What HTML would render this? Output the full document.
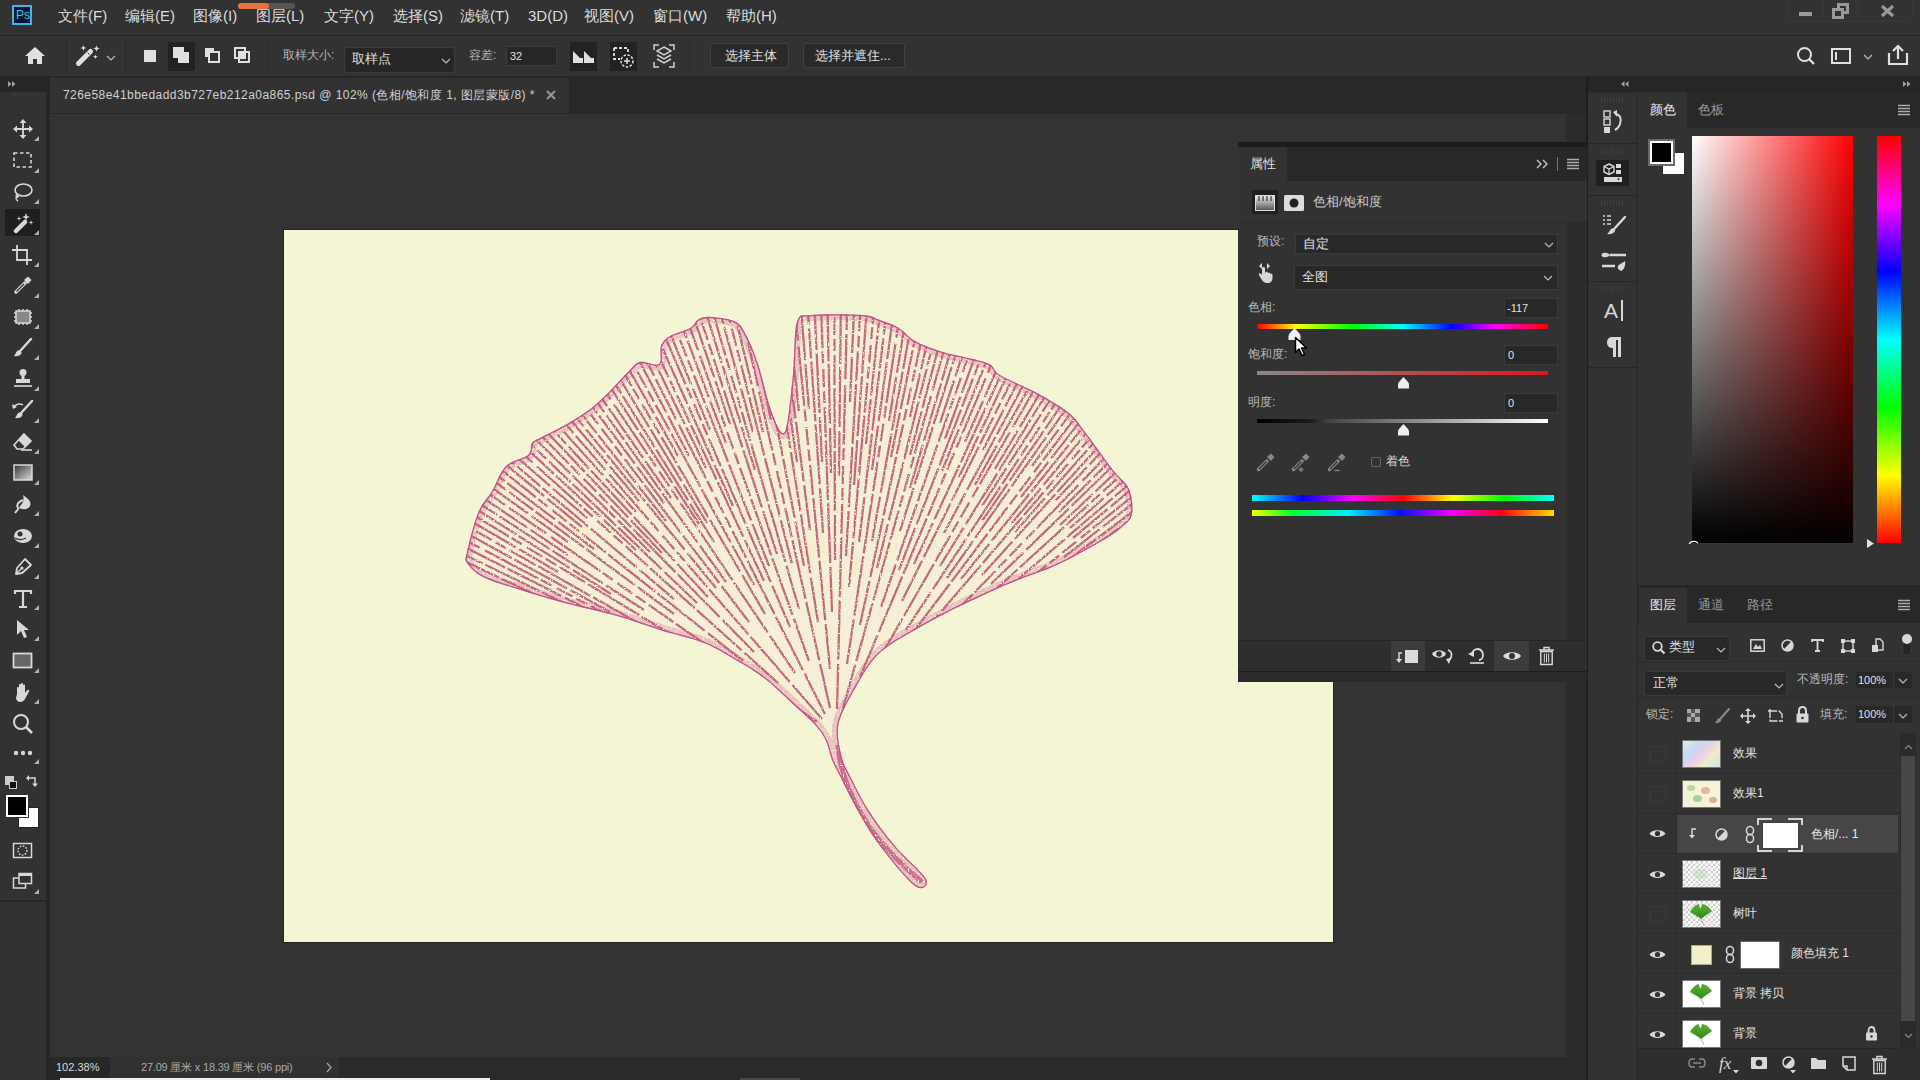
<!DOCTYPE html>
<html><head><meta charset="utf-8">
<style>
*{margin:0;padding:0;box-sizing:border-box}
html,body{width:1920px;height:1080px;overflow:hidden;background:#333333;font-family:"Liberation Sans",sans-serif;color:#d6d6d6}
.a{position:absolute}
.t{position:absolute;white-space:nowrap;line-height:1}
</style></head><body>
<!-- menubar -->
<div class="a" style="left:0;top:0;width:1920px;height:35px;background:#323232"></div>
<div class="a" style="left:0;top:35px;width:1920px;height:1px;background:#262626"></div>

<!-- PS logo -->
<div class="a" style="left:12px;top:5px;width:20px;height:20px;background:#001a33;border:2px solid #44b4e4"></div>
<div class="t" style="left:16px;top:9px;font-size:12px;color:#4cc0f0;letter-spacing:0px">Ps</div>
<div class="a" style="left:238px;top:3px;width:57px;height:6px;background:#555;border-radius:3px"></div>
<div class="a" style="left:238px;top:3px;width:31px;height:6px;background:#e8743b;border-radius:3px"></div>
<div class="t" style="left:58px;top:8px;font-size:15px;color:#dcdcdc">文件(F)</div>
<div class="t" style="left:125px;top:8px;font-size:15px;color:#dcdcdc">编辑(E)</div>
<div class="t" style="left:193px;top:8px;font-size:15px;color:#dcdcdc">图像(I)</div>
<div class="t" style="left:256px;top:8px;font-size:15px;color:#dcdcdc">图层(L)</div>
<div class="t" style="left:324px;top:8px;font-size:15px;color:#dcdcdc">文字(Y)</div>
<div class="t" style="left:393px;top:8px;font-size:15px;color:#dcdcdc">选择(S)</div>
<div class="t" style="left:460px;top:8px;font-size:15px;color:#dcdcdc">滤镜(T)</div>
<div class="t" style="left:528px;top:8px;font-size:15px;color:#dcdcdc">3D(D)</div>
<div class="t" style="left:584px;top:8px;font-size:15px;color:#dcdcdc">视图(V)</div>
<div class="t" style="left:653px;top:8px;font-size:15px;color:#dcdcdc">窗口(W)</div>
<div class="t" style="left:726px;top:8px;font-size:15px;color:#dcdcdc">帮助(H)</div>
<!-- window controls -->
<div class="a" style="left:1787px;top:-4px;width:126px;height:26px;border:1px solid #383838;border-radius:4px"></div>
<div class="a" style="left:1823px;top:0;width:1px;height:22px;background:#383838"></div>
<div class="a" style="left:1857px;top:0;width:1px;height:22px;background:#383838"></div>
<div class="a" style="left:1799px;top:12px;width:13px;height:4px;background:#999"></div>
<svg class="a" style="left:1831px;top:3px" width="20" height="18"><rect x="7.5" y="1.5" width="9" height="8" fill="none" stroke="#999" stroke-width="3"/><rect x="2.5" y="6.5" width="9" height="8" fill="#323232" stroke="#999" stroke-width="3"/></svg>
<svg class="a" style="left:1880px;top:5px" width="15" height="12"><path d="M2 1L13 11M13 1L2 11" stroke="#999" stroke-width="3.2"/></svg>
<!-- options bar -->
<div class="a" style="left:0;top:36px;width:1920px;height:41px;background:#323232"></div>
<div class="a" style="left:0;top:76px;width:1920px;height:1px;background:#262626"></div>

<!-- options content -->
<svg class="a" style="left:24px;top:46px" width="22" height="20"><path d="M11 1L1 10H4V18H9V13H13V18H18V10H21Z" fill="#e0e0e0"/></svg>
<div class="a" style="left:66px;top:40px;width:1px;height:32px;background:#2a2a2a"></div>
<svg class="a" style="left:74px;top:44px" width="30" height="24"><path d="M4.5 19.5L16.5 7.5" stroke="#e0e0e0" stroke-width="5" stroke-linecap="round"/><path d="M13.5 8.5L15.5 10.5" stroke="#323232" stroke-width="1"/><path d="M9.4 0.6000000000000001Q9.4 4 12.8 4Q9.4 4 9.4 7.4Q9.4 4 6.0 4Q9.4 4 9.4 0.6000000000000001ZM22.5 0.7000000000000002Q22.5 4.5 26.3 4.5Q22.5 4.5 22.5 8.3Q22.5 4.5 18.7 4.5Q22.5 4.5 22.5 0.7000000000000002ZM21.4 10.0Q21.4 12.8 24.2 12.8Q21.4 12.8 21.4 15.600000000000001Q21.4 12.8 18.599999999999998 12.8Q21.4 12.8 21.4 10.0Z" fill="#e0e0e0"/></svg>
<svg class="a" style="left:106px;top:55px" width="10" height="6"><path d="M1 1L5 5L9 1" stroke="#bbb" stroke-width="1.2" fill="none"/></svg>
<div class="a" style="left:125px;top:40px;width:1px;height:32px;background:#2a2a2a"></div>
<div class="a" style="left:144px;top:50px;width:12px;height:12px;background:#e0e0e0"></div>
<div class="a" style="left:168px;top:42px;width:27px;height:29px;background:#222"></div>
<div class="a" style="left:173px;top:47px;width:11px;height:11px;background:#e0e0e0"></div>
<div class="a" style="left:178px;top:52px;width:11px;height:11px;background:#e0e0e0"></div>
<svg class="a" style="left:203px;top:46px" width="18" height="18"><rect x="2" y="2" width="9" height="9" fill="#e0e0e0"/><rect x="6" y="6" width="10" height="10" fill="#323232" stroke="#e0e0e0" stroke-width="2"/></svg>
<svg class="a" style="left:233px;top:46px" width="18" height="18"><rect x="2" y="2" width="10" height="10" fill="none" stroke="#e0e0e0" stroke-width="2"/><rect x="6" y="6" width="10" height="10" fill="none" stroke="#e0e0e0" stroke-width="2"/><rect x="6" y="6" width="6" height="6" fill="#e0e0e0"/></svg>
<div class="a" style="left:268px;top:40px;width:1px;height:32px;background:#2a2a2a"></div>
<div class="t" style="left:283px;top:49px;font-size:12px;color:#b4b4b4">取样大小:</div>
<div class="a" style="left:344px;top:47px;width:111px;height:26px;background:#262626;border:1px solid #3c3c3c;border-radius:2px"></div>
<div class="t" style="left:352px;top:52px;font-size:13px;color:#e0e0e0">取样点</div>
<svg class="a" style="left:441px;top:58px" width="10" height="6"><path d="M1 1L5 5L9 1" stroke="#bbb" stroke-width="1.2" fill="none"/></svg>
<div class="t" style="left:469px;top:49px;font-size:12px;color:#b4b4b4">容差:</div>
<div class="a" style="left:506px;top:46px;width:51px;height:20px;background:#262626;border:1px solid #3c3c3c"></div>
<div class="t" style="left:510px;top:51px;font-size:11px;color:#e0e0e0">32</div>
<div class="a" style="left:570px;top:42px;width:27px;height:29px;background:#222"></div>
<svg class="a" style="left:572px;top:48px" width="24" height="17"><path d="M1 3L5 7V15H1Z M5 7L8 10H11V15H5Z M12 3L16 7V15H12Z M16 7L19 10H22V15H16Z" fill="#e0e0e0"/></svg>
<div class="a" style="left:610px;top:42px;width:27px;height:29px;background:#222"></div>
<svg class="a" style="left:611px;top:45px" width="25" height="24"><path d="M3 3H17V9 M3 3V14H9" stroke="#e0e0e0" stroke-width="1.8" fill="none" stroke-dasharray="3 2"/><circle cx="16" cy="16" r="6" stroke="#e0e0e0" stroke-width="1.5" fill="none" stroke-dasharray="2.5 1.5"/><path d="M16 13V19M13 16H19" stroke="#e0e0e0" stroke-width="1.5"/></svg>
<svg class="a" style="left:653px;top:44px" width="22" height="24"><path d="M1 6V1H6 M16 1H21V6 M1 18V23H6 M16 23H21V18" stroke="#d0d0d0" stroke-width="1.5" fill="none"/></g><path d="M11 3L18 7L11 11L4 7Z" fill="none" stroke="#d0d0d0" stroke-width="1.5"/><path d="M4 11L11 15L18 11 M4 15L11 19L18 15" fill="none" stroke="#d0d0d0" stroke-width="1.5"/></svg>
<div class="a" style="left:689px;top:40px;width:1px;height:32px;background:#2a2a2a"></div>
<div class="a" style="left:710px;top:43px;width:79px;height:25px;background:#2a2a2a;border:1px solid #404040;border-radius:2px"></div>
<div class="t" style="left:725px;top:49px;font-size:13px;color:#e0e0e0">选择主体</div>
<div class="a" style="left:803px;top:43px;width:102px;height:25px;background:#2a2a2a;border:1px solid #404040;border-radius:2px"></div>
<div class="t" style="left:815px;top:49px;font-size:13px;color:#e0e0e0">选择并遮住...</div>
<!-- right options -->
<svg class="a" style="left:1796px;top:46px" width="20" height="20"><circle cx="8.5" cy="8.5" r="6.5" stroke="#e0e0e0" stroke-width="2" fill="none"/><path d="M13 13L18 18" stroke="#e0e0e0" stroke-width="2.4"/></svg>
<svg class="a" style="left:1831px;top:48px" width="20" height="16"><rect x="1" y="1" width="18" height="14" fill="none" stroke="#e0e0e0" stroke-width="2"/><path d="M5 4V12" stroke="#e0e0e0" stroke-width="2"/></svg>
<svg class="a" style="left:1863px;top:54px" width="10" height="6"><path d="M1 1L5 5L9 1" stroke="#bbb" stroke-width="1.2" fill="none"/></svg>
<svg class="a" style="left:1887px;top:44px" width="22" height="22"><path d="M2 9V20H20V9" stroke="#e0e0e0" stroke-width="2.2" fill="none"/><path d="M11 15V2 M6 7L11 2L16 7" stroke="#e0e0e0" stroke-width="2.2" fill="none"/></svg>

<!-- left toolbar -->
<div class="a" style="left:0;top:77px;width:46px;height:1003px;background:#323232"></div>
<div class="a" style="left:0;top:77px;width:46px;height:15px;background:#262626"></div>
<div class="a" style="left:46px;top:77px;width:4px;height:1003px;background:#262626"></div>

<div class="a" style="left:0;top:900px;width:46px;height:2px;background:#262626"></div>
<!-- toolbar header chevrons -->
<svg class="a" style="left:8px;top:81px" width="8" height="6"><path d="M0 0L3.5 3L0 6Z M4 0L7.5 3L4 6Z" fill="#a0a0a0"/></svg>
<div class="a" style="left:12px;top:93px;width:24px;height:3px;background:repeating-linear-gradient(90deg,#3c3c3c 0 1px,transparent 1px 3px)"></div>
<!-- move -->
<svg class="a" style="left:13px;top:119px" width="20" height="20"><path d="M10 1V19M1 10H19" stroke="#d8d8d8" stroke-width="1.8"/><path d="M10 0L13.5 4H6.5Z M10 20L13.5 16H6.5Z M0 10L4 6.5V13.5Z M20 10L16 6.5V13.5Z" fill="#d8d8d8"/></svg>
<svg class="a" style="left:34px;top:136px" width="5" height="5"><path d="M5 0V5H0Z" fill="#b0b0b0"/></svg>
<!-- marquee -->
<svg class="a" style="left:13px;top:152px" width="20" height="18"><rect x="1" y="1" width="17" height="14" fill="none" stroke="#d8d8d8" stroke-width="1.6" stroke-dasharray="3.5 2.5"/></svg>
<svg class="a" style="left:34px;top:168px" width="5" height="5"><path d="M5 0V5H0Z" fill="#b0b0b0"/></svg>
<!-- lasso -->
<svg class="a" style="left:13px;top:182px" width="20" height="20"><ellipse cx="10.5" cy="8" rx="8.5" ry="6" fill="none" stroke="#d8d8d8" stroke-width="1.6"/><path d="M4 12C2 14 4 16 5 15C6 14 4 13 3 16C3 18 5 19 5 19" fill="none" stroke="#d8d8d8" stroke-width="1.4"/></svg>
<svg class="a" style="left:34px;top:199px" width="5" height="5"><path d="M5 0V5H0Z" fill="#b0b0b0"/></svg>
<!-- magic wand selected -->
<div class="a" style="left:5px;top:209px;width:35px;height:27px;background:#1f1f1f"></div>
<svg class="a" style="left:12px;top:212px" width="24" height="22"><path d="M4 19L13 10" stroke="#d8d8d8" stroke-width="4.5" stroke-linecap="round"/><path d="M14 1L15 4L18 5L15 6L14 9L13 6L10 5L13 4Z M7 4L7.6 6L9.5 6.5L7.6 7L7 9L6.4 7L4.5 6.5L6.4 6Z M19 8L19.6 10L21.5 10.5L19.6 11L19 13L18.4 11L16.5 10.5L18.4 10Z" fill="#d8d8d8"/></svg>
<svg class="a" style="left:34px;top:230px" width="5" height="5"><path d="M5 0V5H0Z" fill="#b0b0b0"/></svg>
<!-- crop -->
<svg class="a" style="left:11px;top:244px" width="24" height="22"><path d="M6 1V16H21 M1 6H16V21" fill="none" stroke="#d8d8d8" stroke-width="1.8"/></svg>
<svg class="a" style="left:34px;top:262px" width="5" height="5"><path d="M5 0V5H0Z" fill="#b0b0b0"/></svg>
<!-- eyedropper -->
<svg class="a" style="left:13px;top:275px" width="20" height="20"><path d="M3 17L12 8" stroke="#d8d8d8" stroke-width="3.5" stroke-linecap="round" fill="none"/><path d="M3.5 16.5L11 9" stroke="#323232" stroke-width="1.2"/><path d="M11 5L15 1.5L18.5 5L15 9Z" fill="#d8d8d8"/></svg>
<svg class="a" style="left:34px;top:293px" width="5" height="5"><path d="M5 0V5H0Z" fill="#b0b0b0"/></svg>
<!-- spot healing / patch -->
<svg class="a" style="left:12px;top:307px" width="22" height="20"><rect x="4" y="4" width="14" height="12" fill="#888" stroke="#d8d8d8" stroke-width="1.5"/><path d="M2 6H4M2 10H4M2 14H4M18 6H20M18 10H20M18 14H20M7 2V4M11 2V4M15 2V4M7 16V18M11 16V18M15 16V18" stroke="#d8d8d8" stroke-width="1.5"/></svg>
<svg class="a" style="left:34px;top:324px" width="5" height="5"><path d="M5 0V5H0Z" fill="#b0b0b0"/></svg>
<!-- brush -->
<svg class="a" style="left:13px;top:338px" width="20" height="20"><path d="M18 1L8 12" stroke="#d8d8d8" stroke-width="2.4" stroke-linecap="round"/><path d="M7 12C3 12 3 16 1 18C6 19 10 16 8 13Z" fill="#d8d8d8"/></svg>
<svg class="a" style="left:34px;top:355px" width="5" height="5"><path d="M5 0V5H0Z" fill="#b0b0b0"/></svg>
<!-- stamp -->
<svg class="a" style="left:13px;top:368px" width="20" height="22"><circle cx="10" cy="4.5" r="3.5" fill="#d8d8d8"/><path d="M8.5 7V11H11.5V7Z" fill="#d8d8d8"/><path d="M3 11H17V15H3Z" fill="#d8d8d8"/><path d="M1 18H19" stroke="#d8d8d8" stroke-width="1.6"/></svg>
<svg class="a" style="left:34px;top:386px" width="5" height="5"><path d="M5 0V5H0Z" fill="#b0b0b0"/></svg>
<!-- history brush -->
<svg class="a" style="left:11px;top:400px" width="24" height="20"><path d="M21 1L11 12" stroke="#d8d8d8" stroke-width="2.4" stroke-linecap="round"/><path d="M10 12C6 12 6 16 4 18C9 19 13 16 11 13Z" fill="#d8d8d8"/><path d="M2 8C4 4 9 3 12 5" stroke="#d8d8d8" stroke-width="1.4" fill="none"/><path d="M1 4L2 9L6 7Z" fill="#d8d8d8"/></svg>
<svg class="a" style="left:34px;top:418px" width="5" height="5"><path d="M5 0V5H0Z" fill="#b0b0b0"/></svg>
<!-- eraser -->
<svg class="a" style="left:12px;top:432px" width="22" height="20"><path d="M12 2L19 9L11 17H5L2 13Z" fill="none" stroke="#d8d8d8" stroke-width="1.6"/><path d="M12 2L19 9L13 15L6 8Z" fill="#d8d8d8"/><path d="M9 18H20" stroke="#d8d8d8" stroke-width="1.6"/></svg>
<svg class="a" style="left:34px;top:449px" width="5" height="5"><path d="M5 0V5H0Z" fill="#b0b0b0"/></svg>
<!-- gradient -->
<svg class="a" style="left:13px;top:464px" width="20" height="18"><defs><linearGradient id="gg" x1="0" y1="0" x2="1" y2="1"><stop offset="0" stop-color="#333"/><stop offset="1" stop-color="#ddd"/></linearGradient></defs><rect x="1" y="1" width="18" height="15" fill="url(#gg)" stroke="#d8d8d8" stroke-width="1.5"/></svg>
<svg class="a" style="left:34px;top:480px" width="5" height="5"><path d="M5 0V5H0Z" fill="#b0b0b0"/></svg>
<!-- blur -->
<svg class="a" style="left:13px;top:494px" width="20" height="20"><path d="M10 1C14 4 19 7 17 12C15 16 10 16 6 14C8 10 12 8 10 1Z" fill="#d8d8d8"/><path d="M6 14L2 19" stroke="#d8d8d8" stroke-width="2"/><path d="M10 6C5 8 3 11 5 14" fill="none" stroke="#d8d8d8" stroke-width="2"/></svg>
<svg class="a" style="left:34px;top:511px" width="5" height="5"><path d="M5 0V5H0Z" fill="#b0b0b0"/></svg>
<!-- dodge -->
<svg class="a" style="left:12px;top:526px" width="22" height="20"><ellipse cx="11" cy="10" rx="9" ry="7" fill="#d8d8d8"/><circle cx="8" cy="8" r="2.5" fill="#323232"/><path d="M3 12C6 14 10 14 14 12" stroke="#323232" stroke-width="1.2" fill="none"/></svg>
<svg class="a" style="left:34px;top:543px" width="5" height="5"><path d="M5 0V5H0Z" fill="#b0b0b0"/></svg>
<!-- pen -->
<svg class="a" style="left:13px;top:557px" width="20" height="20"><path d="M12 2L18 8L9 16L3 17L4 11Z" fill="none" stroke="#d8d8d8" stroke-width="1.8" stroke-linejoin="round"/><circle cx="9" cy="11" r="1.6" fill="#d8d8d8"/><path d="M4 16L8.5 11.5" stroke="#d8d8d8" stroke-width="1.2"/></svg>
<svg class="a" style="left:34px;top:574px" width="5" height="5"><path d="M5 0V5H0Z" fill="#b0b0b0"/></svg>
<!-- type -->
<svg class="a" style="left:13px;top:589px" width="20" height="20"><path d="M2 5V2H18V5 M10 2V18 M6 18H14" fill="none" stroke="#d8d8d8" stroke-width="2.2"/></svg>
<svg class="a" style="left:34px;top:605px" width="5" height="5"><path d="M5 0V5H0Z" fill="#b0b0b0"/></svg>
<!-- path selection -->
<svg class="a" style="left:14px;top:619px" width="18" height="20"><path d="M3 1L15 11H10L13 18L10 19L7 12L3 16Z" fill="#d8d8d8"/></svg>
<svg class="a" style="left:34px;top:636px" width="5" height="5"><path d="M5 0V5H0Z" fill="#b0b0b0"/></svg>
<!-- rectangle -->
<svg class="a" style="left:12px;top:652px" width="22" height="18"><rect x="1.5" y="1.5" width="18" height="14" fill="#666" stroke="#d8d8d8" stroke-width="1.8"/></svg>
<svg class="a" style="left:34px;top:668px" width="5" height="5"><path d="M5 0V5H0Z" fill="#b0b0b0"/></svg>
<!-- hand -->
<svg class="a" style="left:12px;top:682px" width="22" height="22"><path d="M5 12V6C5 4.5 7 4.5 7 6V10V3C7 1.5 9 1.5 9 3V10V2C9 0.5 11 0.5 11 2V10V3.5C11 2 13 2 13 3.5V11L15 8.5C16 7 18 8 17 9.5L13 17C12 19 10 20 8 20C6 20 4 18 4 16Z" fill="#d8d8d8"/></svg>
<svg class="a" style="left:34px;top:699px" width="5" height="5"><path d="M5 0V5H0Z" fill="#b0b0b0"/></svg>
<!-- zoom -->
<svg class="a" style="left:12px;top:713px" width="22" height="22"><circle cx="9" cy="9" r="7" fill="none" stroke="#d8d8d8" stroke-width="2"/><path d="M14 14L20 20" stroke="#d8d8d8" stroke-width="2.6"/></svg>
<!-- more -->
<svg class="a" style="left:13px;top:750px" width="20" height="6"><circle cx="3" cy="3" r="2.2" fill="#d8d8d8"/><circle cx="10" cy="3" r="2.2" fill="#d8d8d8"/><circle cx="17" cy="3" r="2.2" fill="#d8d8d8"/></svg>
<svg class="a" style="left:34px;top:759px" width="5" height="5"><path d="M5 0V5H0Z" fill="#b0b0b0"/></svg>
<!-- default colors / swap -->
<div class="a" style="left:5px;top:776px;width:9px;height:9px;background:#ccc"></div>
<div class="a" style="left:9px;top:781px;width:8px;height:8px;background:#111;border:1px solid #ccc"></div>
<svg class="a" style="left:26px;top:775px" width="13" height="13"><path d="M2 3H9V9" fill="none" stroke="#d8d8d8" stroke-width="1.5"/><path d="M0 3L3 0V6Z M9 12L6 8.5H12Z" fill="#d8d8d8"/></svg>
<!-- fg/bg -->
<div class="a" style="left:18px;top:807px;width:21px;height:21px;background:#fff;border:1px solid #222"></div>
<div class="a" style="left:6px;top:795px;width:22px;height:22px;background:#000;border:2px solid #fff;box-shadow:0 0 0 1px #333"></div>
<!-- quick mask -->
<svg class="a" style="left:12px;top:842px" width="22" height="18"><rect x="1.5" y="1.5" width="18" height="14" fill="none" stroke="#d8d8d8" stroke-width="1.5"/><circle cx="10.5" cy="8.5" r="4.5" fill="none" stroke="#d8d8d8" stroke-width="1.5" stroke-dasharray="1.6 1.4"/></svg>
<!-- screen mode -->
<svg class="a" style="left:12px;top:872px" width="22" height="18"><rect x="1.5" y="6" width="12" height="10" fill="none" stroke="#d8d8d8" stroke-width="1.5"/><rect x="7" y="1.5" width="12.5" height="10" fill="#323232" stroke="#d8d8d8" stroke-width="1.5"/><path d="M7 3H19.5" stroke="#d8d8d8" stroke-width="2"/></svg>
<svg class="a" style="left:34px;top:889px" width="5" height="5"><path d="M5 0V5H0Z" fill="#b0b0b0"/></svg>

<!-- tab bar -->
<div class="a" style="left:50px;top:77px;width:1538px;height:37px;background:#282828"></div>
<div class="a" style="left:50px;top:78px;width:519px;height:35px;background:#323232"></div>
<div class="a" style="left:50px;top:113px;width:1516px;height:1px;background:#262626"></div>

<div class="t" style="left:63px;top:89px;font-size:12px;color:#d0d0d0;letter-spacing:0.45px">726e58e41bbedadd3b727eb212a0a865.psd @ 102% (色相/饱和度 1, 图层蒙版/8) *</div>
<svg class="a" style="left:546px;top:90px" width="10" height="10"><path d="M1 1L9 9M9 1L1 9" stroke="#9a9a9a" stroke-width="1.8"/></svg>

<!-- canvas area -->
<div class="a" style="left:50px;top:114px;width:1516px;height:943px;background:#333333"></div>
<!-- document -->
<div class="a" style="left:284px;top:230px;width:1049px;height:712px;background:#f4f5d5;box-shadow:0 0 0 1px #26261e"></div>
<!-- leaf -->
<svg class="a" style="left:0;top:0" width="1920" height="1080" viewBox="0 0 1920 1080">
<defs><filter id="spk" x="0" y="0" width="1920" height="1080" filterUnits="userSpaceOnUse"><feTurbulence type="fractalNoise" baseFrequency="0.6" numOctaves="1" seed="7" result="n"/><feColorMatrix in="n" type="matrix" values="0 0 0 0 1  0 0 0 0 1  0 0 0 0 1  0 0 0 -14 9.6"/></filter><mask id="spm" maskUnits="userSpaceOnUse" x="0" y="0" width="1920" height="1080"><rect x="440" y="300" width="720" height="600" fill="#fff" filter="url(#spk)"/></mask><clipPath id="leafc"><path d="M926 879C922.7 872.3 904.5 857.3 895 846C885.5 834.7 876.7 823.0 869 811C861.3 799.0 853.5 782.8 849 774C844.5 765.2 843.8 764.5 842 758C840.2 751.5 838.2 742.0 838 735C837.8 728.0 837.8 724.3 841 716C844.2 707.7 851.7 694.3 857 685C862.3 675.7 867.5 666.7 873 660C878.5 653.3 883.0 650.0 890 645C897.0 640.0 905.3 635.5 915 630C924.7 624.5 935.5 618.3 948 612C960.5 605.7 977.5 597.7 990 592C1002.5 586.3 1011.8 582.5 1023 578C1034.2 573.5 1044.2 571.0 1057 565C1069.8 559.0 1089.2 548.3 1100 542C1110.8 535.7 1116.7 531.7 1122 527C1127.3 522.3 1130.8 520.3 1132 514C1133.2 507.7 1132.2 496.3 1129 489C1125.8 481.7 1120.3 479.5 1113 470C1105.7 460.5 1092.3 441.5 1085 432C1077.7 422.5 1077.0 419.5 1069 413C1061.0 406.5 1048.5 399.3 1037 393C1025.5 386.7 1008.3 380.0 1000 375C991.7 370.0 996.5 366.8 987 363C977.5 359.2 955.0 355.7 943 352C931.0 348.3 922.3 345.0 915 341C907.7 337.0 904.8 331.5 899 328C893.2 324.5 886.2 322.2 880 320C873.8 317.8 873.3 315.8 862 315C850.7 314.2 822.8 313.8 812 315C801.2 316.2 800.2 312.2 797 322C793.8 331.8 794.7 357.0 793 374C791.3 391.0 789.0 414.3 787 424C785.0 433.7 783.8 434.8 781 432C778.2 429.2 773.8 418.3 770 407C766.2 395.7 761.8 375.7 758 364C754.2 352.3 750.7 344.0 747 337C743.3 330.0 741.8 325.3 736 322C730.2 318.7 718.2 317.5 712 317C705.8 316.5 702.7 317.2 699 319C695.3 320.8 694.8 325.2 690 328C685.2 330.8 674.8 333.0 670 336C665.2 339.0 662.8 341.3 661 346C659.2 350.7 662.5 361.3 659 364C655.5 366.7 645.2 360.7 640 362C634.8 363.3 633.7 366.5 628 372C622.3 377.5 612.5 388.7 606 395C599.5 401.3 595.5 405.2 589 410C582.5 414.8 574.8 419.5 567 424C559.2 428.5 547.8 433.8 542 437C536.2 440.2 534.3 440.0 532 443C529.7 446.0 532.3 451.2 528 455C523.7 458.8 512.0 460.0 506 466C500.0 472.0 496.7 483.2 492 491C487.3 498.8 482.2 502.8 478 513C473.8 523.2 468.8 543.7 467 552C465.2 560.3 464.3 558.8 467 563C469.7 567.2 475.2 572.8 483 577C490.8 581.2 501.0 583.8 514 588C527.0 592.2 543.8 597.3 561 602C578.2 606.7 600.5 611.3 617 616C633.5 620.7 645.5 625.5 660 630C674.5 634.5 691.7 638.2 704 643C716.3 647.8 724.0 653.2 734 659C744.0 664.8 754.2 670.5 764 678C773.8 685.5 784.3 696.0 793 704C801.7 712.0 810.5 719.8 816 726C821.5 732.2 823.3 735.3 826 741C828.7 746.7 829.5 753.8 832 760C834.5 766.2 836.7 769.5 841 778C845.3 786.5 851.5 799.7 858 811C864.5 822.3 870.5 833.5 880 846C889.5 858.5 907.3 880.5 915 886C922.7 891.5 929.3 885.7 926 879Z"/></clipPath></defs>
<path d="M926 879C922.7 872.3 904.5 857.3 895 846C885.5 834.7 876.7 823.0 869 811C861.3 799.0 853.5 782.8 849 774C844.5 765.2 843.8 764.5 842 758C840.2 751.5 838.2 742.0 838 735C837.8 728.0 837.8 724.3 841 716C844.2 707.7 851.7 694.3 857 685C862.3 675.7 867.5 666.7 873 660C878.5 653.3 883.0 650.0 890 645C897.0 640.0 905.3 635.5 915 630C924.7 624.5 935.5 618.3 948 612C960.5 605.7 977.5 597.7 990 592C1002.5 586.3 1011.8 582.5 1023 578C1034.2 573.5 1044.2 571.0 1057 565C1069.8 559.0 1089.2 548.3 1100 542C1110.8 535.7 1116.7 531.7 1122 527C1127.3 522.3 1130.8 520.3 1132 514C1133.2 507.7 1132.2 496.3 1129 489C1125.8 481.7 1120.3 479.5 1113 470C1105.7 460.5 1092.3 441.5 1085 432C1077.7 422.5 1077.0 419.5 1069 413C1061.0 406.5 1048.5 399.3 1037 393C1025.5 386.7 1008.3 380.0 1000 375C991.7 370.0 996.5 366.8 987 363C977.5 359.2 955.0 355.7 943 352C931.0 348.3 922.3 345.0 915 341C907.7 337.0 904.8 331.5 899 328C893.2 324.5 886.2 322.2 880 320C873.8 317.8 873.3 315.8 862 315C850.7 314.2 822.8 313.8 812 315C801.2 316.2 800.2 312.2 797 322C793.8 331.8 794.7 357.0 793 374C791.3 391.0 789.0 414.3 787 424C785.0 433.7 783.8 434.8 781 432C778.2 429.2 773.8 418.3 770 407C766.2 395.7 761.8 375.7 758 364C754.2 352.3 750.7 344.0 747 337C743.3 330.0 741.8 325.3 736 322C730.2 318.7 718.2 317.5 712 317C705.8 316.5 702.7 317.2 699 319C695.3 320.8 694.8 325.2 690 328C685.2 330.8 674.8 333.0 670 336C665.2 339.0 662.8 341.3 661 346C659.2 350.7 662.5 361.3 659 364C655.5 366.7 645.2 360.7 640 362C634.8 363.3 633.7 366.5 628 372C622.3 377.5 612.5 388.7 606 395C599.5 401.3 595.5 405.2 589 410C582.5 414.8 574.8 419.5 567 424C559.2 428.5 547.8 433.8 542 437C536.2 440.2 534.3 440.0 532 443C529.7 446.0 532.3 451.2 528 455C523.7 458.8 512.0 460.0 506 466C500.0 472.0 496.7 483.2 492 491C487.3 498.8 482.2 502.8 478 513C473.8 523.2 468.8 543.7 467 552C465.2 560.3 464.3 558.8 467 563C469.7 567.2 475.2 572.8 483 577C490.8 581.2 501.0 583.8 514 588C527.0 592.2 543.8 597.3 561 602C578.2 606.7 600.5 611.3 617 616C633.5 620.7 645.5 625.5 660 630C674.5 634.5 691.7 638.2 704 643C716.3 647.8 724.0 653.2 734 659C744.0 664.8 754.2 670.5 764 678C773.8 685.5 784.3 696.0 793 704C801.7 712.0 810.5 719.8 816 726C821.5 732.2 823.3 735.3 826 741C828.7 746.7 829.5 753.8 832 760C834.5 766.2 836.7 769.5 841 778C845.3 786.5 851.5 799.7 858 811C864.5 822.3 870.5 833.5 880 846C889.5 858.5 907.3 880.5 915 886C922.7 891.5 929.3 885.7 926 879Z" fill="#f5f0d4"/>
<g clip-path="url(#leafc)"><g mask="url(#spm)"><path d="M810 732L299 674M528 695L300 666M621 704L302 658M512 683L303 650M699 711L304 641M515 673L306 633M668 700L307 625M556 672L309 617M759 716L311 609M543 660L313 601M620 676L315 592M590 664L317 584M713 697L320 576M581 652L322 568M644 670L325 561M557 635L328 553M816 727L331 545M589 638L334 537M663 664L337 529M536 606L340 522M708 678L343 514M600 625L347 506M640 640L350 499M605 618L354 491M772 701L358 484M610 612L362 476M688 651L366 469M558 572L370 462M735 673L374 455M611 594L379 448M644 610L383 441M568 555L388 434M817 722L393 427M568 542L397 420M674 614L402 413M594 549L407 407M743 661L413 400M582 527L418 393M674 599L423 387M587 518L429 381M778 683L434 374M636 550L440 368M697 603L445 362M650 552L451 356M754 652L457 350M662 553L463 344M708 597L469 339M636 512L475 333M822 719L482 328M639 501L488 322M716 588L494 317M666 521L501 312M749 622L508 306M664 503L514 301M726 582L521 296M671 498L528 292M795 673L535 287M699 524L542 282M714 542L549 278M707 523L556 273M765 614L563 269M678 456L570 265M754 585L577 261M689 456L585 257M825 714L592 253M706 468L600 249M764 581L607 246M733 506L615 242M790 627L623 239M710 430L630 236M769 566L638 233M726 443L646 230M809 661L654 227M730 424L662 224M777 554L669 221M755 470L677 219M799 609L685 216M753 432L693 214M792 564L702 212M763 432L710 210M830 708L718 208M771 420L726 206M804 566L734 205M779 411L742 203M818 622L751 202M797 462L759 201M810 530L767 199M799 411L775 198M830 669L784 198M809 409L792 197M823 533L800 196M822 462L809 196M832 612L817 195M831 473L825 195M835 560L834 195M839 476L842 195M837 709L850 195M850 402L859 195M846 556L867 196M854 485L875 196M849 587L884 197M866 444L892 198M859 542L900 199M872 470L909 200M847 664L917 201M889 421L925 202M872 541L933 204M891 457L942 205M860 625L950 207M910 417L958 209M877 568L966 211M910 455L974 213M843 708L982 215M910 488L990 218M900 531L998 220M940 423L1006 223M881 607L1014 225M945 439L1022 228M899 570L1030 231M942 471L1038 234M860 677L1045 237M965 442L1053 241M914 564L1061 244M959 477L1068 247M902 601L1076 251M983 450L1083 255M944 533L1091 259M975 485L1098 263M848 713L1105 267M995 469L1112 271M940 566L1120 275M982 506L1127 280M906 630L1134 284M982 521L1141 289M947 578L1147 294M1032 466L1154 299M884 671L1161 304M1021 497L1168 309M961 579L1174 314M1012 523L1181 319M910 648L1187 325M1015 532L1193 330M982 575L1199 336M1056 500L1206 341M853 718L1212 347M1059 512L1218 353M991 584L1223 359M1060 525L1229 365M937 643L1235 371M1070 528L1241 377M982 610L1246 384M1073 538L1251 390M887 694L1257 396M1064 557L1262 403M1009 605L1267 410M1084 554L1272 416M936 665L1277 423M1107 549L1282 430M1010 620L1286 437M1086 575L1291 444M854 724L1295 451M1088 584L1300 458M996 643L1304 465M1102 587L1308 473M949 674L1312 480M1118 589L1316 487M1023 642L1320 495M1121 599L1323 502M897 707L1327 510M1113 613L1330 517M1033 652L1334 525M1131 616L1337 533M952 690L1340 541M1136 624L1343 548M1046 661L1346 556M1127 638L1348 564" stroke="#c26a7c" stroke-width="2.3" stroke-dasharray="45 4 60 3 60 3 30 4 12 4 18 6 12 3 60 6" fill="none"/><path d="M926 879C922.7 872.3 904.5 857.3 895 846C885.5 834.7 876.7 823.0 869 811C861.3 799.0 853.5 782.8 849 774C844.5 765.2 843.8 764.5 842 758C840.2 751.5 838.2 742.0 838 735C837.8 728.0 837.8 724.3 841 716C844.2 707.7 851.7 694.3 857 685C862.3 675.7 867.5 666.7 873 660C878.5 653.3 883.0 650.0 890 645C897.0 640.0 905.3 635.5 915 630C924.7 624.5 935.5 618.3 948 612C960.5 605.7 977.5 597.7 990 592C1002.5 586.3 1011.8 582.5 1023 578C1034.2 573.5 1044.2 571.0 1057 565C1069.8 559.0 1089.2 548.3 1100 542C1110.8 535.7 1116.7 531.7 1122 527C1127.3 522.3 1130.8 520.3 1132 514C1133.2 507.7 1132.2 496.3 1129 489C1125.8 481.7 1120.3 479.5 1113 470C1105.7 460.5 1092.3 441.5 1085 432C1077.7 422.5 1077.0 419.5 1069 413C1061.0 406.5 1048.5 399.3 1037 393C1025.5 386.7 1008.3 380.0 1000 375C991.7 370.0 996.5 366.8 987 363C977.5 359.2 955.0 355.7 943 352C931.0 348.3 922.3 345.0 915 341C907.7 337.0 904.8 331.5 899 328C893.2 324.5 886.2 322.2 880 320C873.8 317.8 873.3 315.8 862 315C850.7 314.2 822.8 313.8 812 315C801.2 316.2 800.2 312.2 797 322C793.8 331.8 794.7 357.0 793 374C791.3 391.0 789.0 414.3 787 424C785.0 433.7 783.8 434.8 781 432C778.2 429.2 773.8 418.3 770 407C766.2 395.7 761.8 375.7 758 364C754.2 352.3 750.7 344.0 747 337C743.3 330.0 741.8 325.3 736 322C730.2 318.7 718.2 317.5 712 317C705.8 316.5 702.7 317.2 699 319C695.3 320.8 694.8 325.2 690 328C685.2 330.8 674.8 333.0 670 336C665.2 339.0 662.8 341.3 661 346C659.2 350.7 662.5 361.3 659 364C655.5 366.7 645.2 360.7 640 362C634.8 363.3 633.7 366.5 628 372C622.3 377.5 612.5 388.7 606 395C599.5 401.3 595.5 405.2 589 410C582.5 414.8 574.8 419.5 567 424C559.2 428.5 547.8 433.8 542 437C536.2 440.2 534.3 440.0 532 443C529.7 446.0 532.3 451.2 528 455C523.7 458.8 512.0 460.0 506 466C500.0 472.0 496.7 483.2 492 491C487.3 498.8 482.2 502.8 478 513C473.8 523.2 468.8 543.7 467 552C465.2 560.3 464.3 558.8 467 563C469.7 567.2 475.2 572.8 483 577C490.8 581.2 501.0 583.8 514 588C527.0 592.2 543.8 597.3 561 602C578.2 606.7 600.5 611.3 617 616C633.5 620.7 645.5 625.5 660 630C674.5 634.5 691.7 638.2 704 643C716.3 647.8 724.0 653.2 734 659C744.0 664.8 754.2 670.5 764 678C773.8 685.5 784.3 696.0 793 704C801.7 712.0 810.5 719.8 816 726C821.5 732.2 823.3 735.3 826 741C828.7 746.7 829.5 753.8 832 760C834.5 766.2 836.7 769.5 841 778C845.3 786.5 851.5 799.7 858 811C864.5 822.3 870.5 833.5 880 846C889.5 858.5 907.3 880.5 915 886C922.7 891.5 929.3 885.7 926 879Z" fill="none" stroke="#c65a8a" stroke-opacity="0.3" stroke-width="12"/><path d="M838 745C840 770 848 792 862 815C876 840 898 862 922 882" fill="none" stroke="#c45a82" stroke-width="5" stroke-opacity="0.8"/></g>
<path d="M926 879C922.7 872.3 904.5 857.3 895 846C885.5 834.7 876.7 823.0 869 811C861.3 799.0 853.5 782.8 849 774C844.5 765.2 843.8 764.5 842 758C840.2 751.5 838.2 742.0 838 735C837.8 728.0 837.8 724.3 841 716C844.2 707.7 851.7 694.3 857 685C862.3 675.7 867.5 666.7 873 660C878.5 653.3 883.0 650.0 890 645C897.0 640.0 905.3 635.5 915 630C924.7 624.5 935.5 618.3 948 612C960.5 605.7 977.5 597.7 990 592C1002.5 586.3 1011.8 582.5 1023 578C1034.2 573.5 1044.2 571.0 1057 565C1069.8 559.0 1089.2 548.3 1100 542C1110.8 535.7 1116.7 531.7 1122 527C1127.3 522.3 1130.8 520.3 1132 514C1133.2 507.7 1132.2 496.3 1129 489C1125.8 481.7 1120.3 479.5 1113 470C1105.7 460.5 1092.3 441.5 1085 432C1077.7 422.5 1077.0 419.5 1069 413C1061.0 406.5 1048.5 399.3 1037 393C1025.5 386.7 1008.3 380.0 1000 375C991.7 370.0 996.5 366.8 987 363C977.5 359.2 955.0 355.7 943 352C931.0 348.3 922.3 345.0 915 341C907.7 337.0 904.8 331.5 899 328C893.2 324.5 886.2 322.2 880 320C873.8 317.8 873.3 315.8 862 315C850.7 314.2 822.8 313.8 812 315C801.2 316.2 800.2 312.2 797 322C793.8 331.8 794.7 357.0 793 374C791.3 391.0 789.0 414.3 787 424C785.0 433.7 783.8 434.8 781 432C778.2 429.2 773.8 418.3 770 407C766.2 395.7 761.8 375.7 758 364C754.2 352.3 750.7 344.0 747 337C743.3 330.0 741.8 325.3 736 322C730.2 318.7 718.2 317.5 712 317C705.8 316.5 702.7 317.2 699 319C695.3 320.8 694.8 325.2 690 328C685.2 330.8 674.8 333.0 670 336C665.2 339.0 662.8 341.3 661 346C659.2 350.7 662.5 361.3 659 364C655.5 366.7 645.2 360.7 640 362C634.8 363.3 633.7 366.5 628 372C622.3 377.5 612.5 388.7 606 395C599.5 401.3 595.5 405.2 589 410C582.5 414.8 574.8 419.5 567 424C559.2 428.5 547.8 433.8 542 437C536.2 440.2 534.3 440.0 532 443C529.7 446.0 532.3 451.2 528 455C523.7 458.8 512.0 460.0 506 466C500.0 472.0 496.7 483.2 492 491C487.3 498.8 482.2 502.8 478 513C473.8 523.2 468.8 543.7 467 552C465.2 560.3 464.3 558.8 467 563C469.7 567.2 475.2 572.8 483 577C490.8 581.2 501.0 583.8 514 588C527.0 592.2 543.8 597.3 561 602C578.2 606.7 600.5 611.3 617 616C633.5 620.7 645.5 625.5 660 630C674.5 634.5 691.7 638.2 704 643C716.3 647.8 724.0 653.2 734 659C744.0 664.8 754.2 670.5 764 678C773.8 685.5 784.3 696.0 793 704C801.7 712.0 810.5 719.8 816 726C821.5 732.2 823.3 735.3 826 741C828.7 746.7 829.5 753.8 832 760C834.5 766.2 836.7 769.5 841 778C845.3 786.5 851.5 799.7 858 811C864.5 822.3 870.5 833.5 880 846C889.5 858.5 907.3 880.5 915 886C922.7 891.5 929.3 885.7 926 879Z" fill="none" stroke="#c4508a" stroke-width="2.6"/>
</svg>
<!-- status bar -->
<div class="a" style="left:50px;top:1057px;width:1538px;height:23px;background:#2a2a2a"></div>

<div class="a" style="left:50px;top:1057px;width:60px;height:22px;background:#272727"></div><div class="a" style="left:110px;top:1057px;width:229px;height:22px;background:#313131"></div>
<div class="t" style="left:56px;top:1062px;font-size:11px;color:#d8d8d8">102.38%</div>
<div class="t" style="left:141px;top:1062px;font-size:11px;color:#a8a8a8;letter-spacing:-0.2px">27.09 厘米 x 18.39 厘米 (96 ppi)</div>
<svg class="a" style="left:326px;top:1062px" width="7" height="11"><path d="M1 1L5 5.5L1 10" fill="none" stroke="#aaa" stroke-width="1.2"/></svg>
<div class="a" style="left:60px;top:1078px;width:430px;height:2px;background:#f0f0f0"></div><div class="a" style="left:740px;top:1078px;width:60px;height:2px;background:#4a4a4a"></div>
<div class="a" style="left:1566px;top:1057px;width:20px;height:21px;background:#343434"></div>

<!-- vertical scrollbar -->
<div class="a" style="left:1566px;top:114px;width:20px;height:966px;background:#2b2b2b"></div>
<div class="a" style="left:1586px;top:77px;width:2px;height:1003px;background:#1e1e1e"></div>
<!-- right icon strip -->
<div class="a" style="left:1588px;top:77px;width:50px;height:1003px;background:#323232"></div>
<div class="a" style="left:1588px;top:77px;width:332px;height:15px;background:#262626"></div>
<!-- right panels -->
<div class="a" style="left:1638px;top:92px;width:282px;height:988px;background:#323232"></div>
<!-- properties panel -->
<div class="a" style="left:1238px;top:142px;width:349px;height:540px;background:#323232;box-shadow:1px 0 0 0 #1e1e1e"></div>
<div class="a" style="left:1238px;top:142px;width:349px;height:5px;background:#1c1c1c"></div>
<div class="a" style="left:1238px;top:147px;width:349px;height:34px;background:#282828"></div>
<div class="a" style="left:1238px;top:147px;width:49px;height:34px;background:#323232"></div>
<div class="t" style="left:1250px;top:157px;font-size:13px;color:#e0e0e0">属性</div>
<svg class="a" style="left:1536px;top:159px" width="13" height="10"><path d="M1 1L5 5L1 9M7 1L11 5L7 9" fill="none" stroke="#c8c8c8" stroke-width="1.4"/></svg>
<div class="a" style="left:1557px;top:157px;width:1px;height:14px;background:#777"></div>
<svg class="a" style="left:1566px;top:158px" width="14" height="12"><path d="M1 1.5H13M1 4.5H13M1 7.5H13M1 10.5H13" stroke="#aaa" stroke-width="1.4"/></svg>
<!-- icon row -->
<div class="a" style="left:1252px;top:190px;width:26px;height:24px;background:#202020"></div>
<svg class="a" style="left:1255px;top:195px" width="20" height="16"><defs><linearGradient id="hg" x1="0" y1="0" x2="0" y2="1"><stop offset="0" stop-color="#eee"/><stop offset="1" stop-color="#555"/></linearGradient></defs><rect x="0.5" y="0.5" width="19" height="15" fill="url(#hg)" stroke="#ddd"/><path d="M4 1V6M8 1V6M12 1V6M16 1V6" stroke="#333" stroke-width="1.2"/></svg>
<svg class="a" style="left:1284px;top:195px" width="20" height="16"><rect x="0" y="0" width="20" height="16" rx="1.5" fill="#dcdcdc"/><circle cx="10" cy="8" r="4.5" fill="#222"/></svg>
<div class="t" style="left:1313px;top:195px;font-size:13px;color:#c8c8c8">色相/饱和度</div>
<div class="a" style="left:1238px;top:222px;width:349px;height:1px;background:#2a2a2a"></div>
<!-- scrollbar of panel -->
<div class="a" style="left:1567px;top:223px;width:20px;height:418px;background:#2c2c2c"></div>
<!-- preset -->
<div class="t" style="left:1257px;top:235px;font-size:12px;color:#b8b8b8">预设:</div>
<div class="a" style="left:1295px;top:234px;width:263px;height:20px;background:#282828;border:1px solid #3a3a3a"></div>
<div class="t" style="left:1303px;top:237px;font-size:13px;color:#e0e0e0">自定</div>
<svg class="a" style="left:1544px;top:242px" width="10" height="6"><path d="M1 1L5 5L9 1" stroke="#bbb" stroke-width="1.2" fill="none"/></svg>
<svg class="a" style="left:1256px;top:262px" width="20" height="22"><path d="M3 4L6 1V7Z M14 4L11 1V7Z" fill="#d8d8d8"/><path d="M7.5 5C8.5 5 9 5.5 9 6.5V11L10 10C11 9.5 12 10 12 11L12.5 11C13.5 10.5 14.5 11 14.5 12C15.5 11.5 16.5 12 16.5 13V16C16.5 19 14.5 21 11.5 21C8 21 6.5 19 5 16.5L3 13C2.5 12 3.5 11 4.5 11.5L6 13V6.5C6 5.5 6.5 5 7.5 5Z" fill="#d8d8d8"/></svg>
<div class="a" style="left:1294px;top:265px;width:264px;height:25px;background:#282828;border:1px solid #3a3a3a"></div>
<div class="t" style="left:1302px;top:270px;font-size:13px;color:#e0e0e0">全图</div>
<svg class="a" style="left:1543px;top:275px" width="10" height="6"><path d="M1 1L5 5L9 1" stroke="#bbb" stroke-width="1.2" fill="none"/></svg>
<!-- hue -->
<div class="t" style="left:1248px;top:301px;font-size:12px;color:#b8b8b8">色相:</div>
<div class="a" style="left:1504px;top:298px;width:54px;height:20px;background:#282828;border:1px solid #3a3a3a"></div>
<div class="t" style="left:1507px;top:303px;font-size:11px;color:#e0e0e0">-117</div>
<div class="a" style="left:1257px;top:324px;width:291px;height:5px;border-radius:2px;background:linear-gradient(90deg,#f00 0%,#ff0 13.5%,#0f0 32.5%,#0ff 50%,#00f 67%,#f0f 81.5%,#f00 100%)"></div>
<svg class="a" style="left:1288px;top:328px" width="13" height="13"><path d="M6.5 0L11.3 5.3Q12.5 6.6 12.5 8.3V12H0.5V8.3Q0.5 6.6 1.7 5.3Z" fill="#eeeeee"/></svg>
<!-- sat -->
<div class="t" style="left:1248px;top:348px;font-size:12px;color:#b8b8b8">饱和度:</div>
<div class="a" style="left:1504px;top:345px;width:54px;height:20px;background:#282828;border:1px solid #3a3a3a"></div>
<div class="t" style="left:1508px;top:350px;font-size:11px;color:#e0e0e0">0</div>
<div class="a" style="left:1257px;top:371px;width:291px;height:4px;background:linear-gradient(90deg,#888 0%,#e0141e 100%)"></div>
<svg class="a" style="left:1397px;top:377px" width="13" height="12"><path d="M6.5 0L11 5Q12 6.2 12 7.8V11.5H1V7.8Q1 6.2 2 5Z" fill="#eeeeee"/></svg>
<!-- light -->
<div class="t" style="left:1248px;top:396px;font-size:12px;color:#b8b8b8">明度:</div>
<div class="a" style="left:1504px;top:393px;width:54px;height:20px;background:#282828;border:1px solid #3a3a3a"></div>
<div class="t" style="left:1508px;top:398px;font-size:11px;color:#e0e0e0">0</div>
<div class="a" style="left:1257px;top:419px;width:291px;height:4px;background:linear-gradient(90deg,#000 0%,#1a1a1a 18%,#444 25%,#808080 50%,#fff 100%)"></div>
<svg class="a" style="left:1397px;top:424px" width="13" height="12"><path d="M6.5 0L11 5Q12 6.2 12 7.8V11.5H1V7.8Q1 6.2 2 5Z" fill="#eeeeee"/></svg>
<!-- eyedroppers -->
<svg class="a" style="left:1256px;top:452px" width="20" height="20"><path d="M2.5 17.5L11 9" stroke="#888" stroke-width="3.4" stroke-linecap="round"/><path d="M3 17L10.5 9.5" stroke="#323232" stroke-width="1.2"/><path d="M11 5L15 1.5L18.5 5L15 9Z" fill="#888"/></svg>
<svg class="a" style="left:1291px;top:452px" width="20" height="20"><path d="M2.5 17.5L11 9" stroke="#888" stroke-width="3.4" stroke-linecap="round"/><path d="M3 17L10.5 9.5" stroke="#323232" stroke-width="1.2"/><path d="M11 5L15 1.5L18.5 5L15 9Z" fill="#888"/><path d="M10 15V20M7.5 17.5H12.5" stroke="#888" stroke-width="1.3"/></svg>
<svg class="a" style="left:1327px;top:452px" width="20" height="20"><path d="M2.5 17.5L11 9" stroke="#888" stroke-width="3.4" stroke-linecap="round"/><path d="M3 17L10.5 9.5" stroke="#323232" stroke-width="1.2"/><path d="M11 5L15 1.5L18.5 5L15 9Z" fill="#888"/><path d="M7.5 18.5H12.5" stroke="#888" stroke-width="1.3"/></svg>
<div class="a" style="left:1371px;top:457px;width:10px;height:10px;border:1px solid #666;border-radius:2px"></div>
<div class="t" style="left:1386px;top:455px;font-size:12px;color:#d8d8d8">着色</div>
<!-- color bars -->
<div class="a" style="left:1252px;top:495px;width:302px;height:6px;background:linear-gradient(90deg,#0ff 0%,#00f 16.7%,#f0f 33.3%,#f00 50%,#ff0 66.7%,#0f0 83.3%,#0ff 100%)"></div>
<div class="a" style="left:1252px;top:510px;width:302px;height:6px;background:linear-gradient(90deg,#f4ff00 0%,#00ff30 13.5%,#00f0ff 32%,#0010ff 49%,#f000ff 66%,#ff0010 82.5%,#ffe000 100%)"></div>
<!-- footer -->
<div class="a" style="left:1238px;top:640px;width:349px;height:1px;background:#262626"></div>
<div class="a" style="left:1238px;top:641px;width:349px;height:30px;background:#2e2e2e"></div>
<div class="a" style="left:1391px;top:641px;width:34px;height:30px;background:#3c3c3c"></div>
<div class="a" style="left:1494px;top:641px;width:35px;height:30px;background:#3c3c3c"></div>
<svg class="a" style="left:1396px;top:648px" width="24" height="17"><rect x="9" y="2" width="13" height="13" fill="#dcdcdc"/><path d="M6 5H3V12" fill="none" stroke="#dcdcdc" stroke-width="1.4"/><path d="M0 11H6L3 15Z" fill="#dcdcdc"/></svg>
<svg class="a" style="left:1431px;top:647px" width="24" height="19"><path d="M1 7C4 2 12 2 15 7C12 12 4 12 1 7Z" fill="#dcdcdc"/><circle cx="8" cy="7" r="2.8" fill="#323232"/><path d="M17 3C21 4 22 10 18 13" fill="none" stroke="#dcdcdc" stroke-width="1.6"/><path d="M15 12L20 11L18 17Z" fill="#dcdcdc"/></svg>
<svg class="a" style="left:1466px;top:646px" width="22" height="20"><path d="M6 9C6 5 9 3 12 3C15 3 17 6 17 9C17 12 15 14 13 14" fill="none" stroke="#dcdcdc" stroke-width="1.8"/><path d="M2 8L8 5V11Z" fill="#dcdcdc"/><path d="M4 17H18" stroke="#dcdcdc" stroke-width="1.6"/></svg>
<svg class="a" style="left:1502px;top:650px" width="20" height="12"><path d="M1 6C4 1 16 1 19 6C16 11 4 11 1 6Z" fill="#dcdcdc"/><circle cx="10" cy="6" r="3" fill="#323232"/></svg>
<svg class="a" style="left:1538px;top:646px" width="17" height="20"><path d="M1 4H16M6 4V1.5H11V4" fill="none" stroke="#dcdcdc" stroke-width="1.4"/><path d="M2.8 5.5H14.2V18.5H2.8Z" fill="none" stroke="#dcdcdc" stroke-width="1.4"/><path d="M6.3 7.5V16.5M8.5 7.5V16.5M10.7 7.5V16.5" stroke="#dcdcdc" stroke-width="1"/></svg>
<div class="a" style="left:1238px;top:671px;width:349px;height:11px;background:#2a2a2a;border-top:1px solid #1e1e1e"></div>



<!-- right strip -->
<svg class="a" style="left:1621px;top:81px" width="8" height="6"><path d="M3.5 0L0 3L3.5 6Z M7.5 0L4 3L7.5 6Z" fill="#a0a0a0"/></svg>
<svg class="a" style="left:1903px;top:81px" width="8" height="6"><path d="M0 0L3.5 3L0 6Z M4 0L7.5 3L4 6Z" fill="#a0a0a0"/></svg>
<div class="a" style="left:1588px;top:92px;width:50px;height:1px;background:#2a2a2a"></div>
<div class="a" style="left:1637px;top:92px;width:1px;height:988px;background:#262626"></div>
<div class="a" style="left:1601px;top:97px;width:24px;height:6px;background:repeating-linear-gradient(90deg,#3e3e3e 0 1px,transparent 1px 3px)"></div>
<svg class="a" style="left:1603px;top:110px" width="22" height="24"><rect x="1" y="1" width="6" height="6" fill="none" stroke="#d8d8d8" stroke-width="1.4"/><rect x="1" y="9" width="6" height="6" fill="none" stroke="#d8d8d8" stroke-width="1.4"/><rect x="1" y="17" width="6" height="6" fill="#d8d8d8"/><path d="M12 4C17 4 19 9 17 14C16 17 14 19 12 20" fill="none" stroke="#d8d8d8" stroke-width="2"/><path d="M10 2L14 0V7Z" fill="#d8d8d8"/></svg>
<div class="a" style="left:1588px;top:143px;width:50px;height:1px;background:#262626"></div>
<div class="a" style="left:1601px;top:148px;width:24px;height:6px;background:repeating-linear-gradient(90deg,#3e3e3e 0 1px,transparent 1px 3px)"></div>
<div class="a" style="left:1596px;top:160px;width:33px;height:26px;background:#1f1f1f"></div>
<svg class="a" style="left:1603px;top:163px" width="20" height="20"><path d="M6 1L11 3.5V9L6 11.5L1 9V3.5Z" fill="none" stroke="#d8d8d8" stroke-width="1.4"/><path d="M1 3.5L6 6L11 3.5M6 6V11.5" stroke="#d8d8d8" stroke-width="1.2" fill="none"/><rect x="13" y="1" width="5" height="4" fill="#d8d8d8"/><rect x="13" y="7" width="5" height="4" fill="#d8d8d8"/><rect x="1" y="14" width="18" height="5" fill="#d8d8d8"/><path d="M14 15.5L17 15.5L15.5 17.5Z" fill="#222"/></svg>
<div class="a" style="left:1588px;top:195px;width:50px;height:1px;background:#262626"></div>
<div class="a" style="left:1601px;top:200px;width:24px;height:6px;background:repeating-linear-gradient(90deg,#3e3e3e 0 1px,transparent 1px 3px)"></div>
<svg class="a" style="left:1602px;top:214px" width="24" height="22"><path d="M1 2H3M1 6H3M1 10H3M5 2H9M5 6H9M5 10H9" stroke="#d8d8d8" stroke-width="1.5"/><path d="M23 3L13 14" stroke="#d8d8d8" stroke-width="2.4" stroke-linecap="round"/><path d="M12 14C8 14 8 18 5 20C10 21 14 18 13 15Z" fill="#d8d8d8"/></svg>
<svg class="a" style="left:1601px;top:250px" width="26" height="22"><path d="M9 5H25M1 16H14" stroke="#d8d8d8" stroke-width="2.4"/><path d="M2 3C5 2 9 4 9 5C9 6 5 8 2 7C0 6 0 4 2 3Z" fill="#d8d8d8"/><path d="M24 11C25 15 23 20 20 21C18 20 16 18 17 16C18 14 22 13 24 11Z" fill="#d8d8d8"/></svg>
<div class="a" style="left:1588px;top:281px;width:50px;height:1px;background:#262626"></div>
<div class="a" style="left:1601px;top:286px;width:24px;height:6px;background:repeating-linear-gradient(90deg,#3e3e3e 0 1px,transparent 1px 3px)"></div>
<div class="t" style="left:1604px;top:300px;font-size:21px;color:#d8d8d8">A</div>
<div class="a" style="left:1621px;top:300px;width:2px;height:21px;background:#d8d8d8"></div>
<svg class="a" style="left:1606px;top:336px" width="16" height="22"><path d="M7 1H15V21H12V4H10V21H7V12C3 12 1 10 1 6.5C1 3 3 1 7 1Z" fill="#d8d8d8"/></svg>
<div class="a" style="left:1588px;top:367px;width:50px;height:1px;background:#262626"></div>
<!-- color panel -->
<div class="a" style="left:1638px;top:92px;width:282px;height:36px;background:#282828"></div>
<div class="a" style="left:1638px;top:92px;width:49px;height:36px;background:#323232"></div>
<div class="t" style="left:1650px;top:103px;font-size:13px;color:#e8e8e8">颜色</div>
<div class="t" style="left:1698px;top:103px;font-size:13px;color:#9a9a9a">色板</div>
<svg class="a" style="left:1897px;top:104px" width="14" height="12"><path d="M1 1.5H13M1 4.5H13M1 7.5H13M1 10.5H13" stroke="#aaa" stroke-width="1.4"/></svg>
<div class="a" style="left:1663px;top:153px;width:21px;height:21px;background:#fff"></div>
<div class="a" style="left:1648px;top:139px;width:27px;height:27px;background:#000;border:2px solid #6a6a6a;box-shadow:inset 0 0 0 2px #fff"></div>
<div class="a" style="left:1692px;top:136px;width:161px;height:407px;background:linear-gradient(to bottom,rgba(0,0,0,0),#000),linear-gradient(to right,#fff,#f00)"></div>
<svg class="a" style="left:1688px;top:536px" width="12" height="10"><path d="M1 8A6 6 0 0 1 10 7" fill="none" stroke="#fff" stroke-width="1.2"/></svg>
<div class="a" style="left:1877px;top:136px;width:24px;height:407px;background:linear-gradient(to bottom,#f00 0%,#f0f 16.7%,#00f 33.3%,#0ff 50%,#0f0 66.7%,#ff0 83.3%,#f00 100%)"></div>
<svg class="a" style="left:1866px;top:538px" width="9" height="11"><path d="M1 1Q8 5.5 8 5.5Q1 10 1 10Z" fill="#e0e0e0"/></svg>
<div class="a" style="left:1638px;top:585px;width:282px;height:3px;background:#262626"></div>
<!-- layers panel -->
<div class="a" style="left:1638px;top:588px;width:282px;height:35px;background:#282828"></div>
<div class="a" style="left:1639px;top:588px;width:48px;height:35px;background:#323232"></div>
<div class="t" style="left:1650px;top:598px;font-size:13px;color:#e8e8e8">图层</div>
<div class="t" style="left:1698px;top:598px;font-size:13px;color:#9a9a9a">通道</div>
<div class="t" style="left:1747px;top:598px;font-size:13px;color:#9a9a9a">路径</div>
<svg class="a" style="left:1897px;top:599px" width="14" height="12"><path d="M1 1.5H13M1 4.5H13M1 7.5H13M1 10.5H13" stroke="#aaa" stroke-width="1.4"/></svg>
<div class="a" style="left:1644px;top:636px;width:86px;height:25px;background:#282828;border:1px solid #3a3a3a;border-radius:2px"></div>
<svg class="a" style="left:1652px;top:641px" width="14" height="14"><circle cx="5.5" cy="5.5" r="4.3" fill="none" stroke="#d8d8d8" stroke-width="1.8"/><path d="M8.5 8.5L12.5 12.5" stroke="#d8d8d8" stroke-width="2.2"/></svg>
<div class="t" style="left:1669px;top:640px;font-size:13px;color:#e0e0e0">类型</div>
<svg class="a" style="left:1716px;top:647px" width="10" height="6"><path d="M1 1L5 5L9 1" stroke="#bbb" stroke-width="1.2" fill="none"/></svg>
<svg class="a" style="left:1750px;top:639px" width="15" height="13"><rect x="0.8" y="0.8" width="13.4" height="11.4" fill="none" stroke="#d8d8d8" stroke-width="1.5"/><path d="M3 10L6 5L8 8L10 6L12 10Z" fill="#d8d8d8"/></svg>
<svg class="a" style="left:1781px;top:639px" width="13" height="13"><circle cx="6.5" cy="6.5" r="5.5" fill="none" stroke="#d8d8d8" stroke-width="1.5"/><path d="M10.4 2.6A5.5 5.5 0 0 1 2.6 10.4Z" fill="#d8d8d8"/></svg>
<svg class="a" style="left:1811px;top:639px" width="13" height="13"><path d="M1 3V1H12V3M6.5 1V12M4 12H9" fill="none" stroke="#d8d8d8" stroke-width="1.8"/></svg>
<svg class="a" style="left:1841px;top:639px" width="14" height="14"><rect x="2" y="2" width="10" height="10" fill="none" stroke="#d8d8d8" stroke-width="1.4"/><rect x="0" y="0" width="4" height="4" fill="#d8d8d8"/><rect x="10" y="0" width="4" height="4" fill="#d8d8d8"/><rect x="0" y="10" width="4" height="4" fill="#d8d8d8"/><rect x="10" y="10" width="4" height="4" fill="#d8d8d8"/></svg>
<svg class="a" style="left:1871px;top:638px" width="13" height="15"><path d="M5 1H9L12 4V12H5Z" fill="none" stroke="#d8d8d8" stroke-width="1.4"/><rect x="1" y="7" width="6" height="7" fill="#d8d8d8"/></svg>
<div class="a" style="left:1902px;top:634px;width:10px;height:22px;border-radius:5px;border:1px solid #3c3c3c;background:#262626"></div>
<div class="a" style="left:1902px;top:634px;width:10px;height:10px;border-radius:5px;background:#d8d8d8"></div>
<div class="a" style="left:1638px;top:661px;width:282px;height:1px;background:#2a2a2a"></div>
<div class="a" style="left:1644px;top:671px;width:143px;height:25px;background:#282828;border:1px solid #3a3a3a;border-radius:2px"></div>
<div class="t" style="left:1653px;top:676px;font-size:13px;color:#e0e0e0">正常</div>
<svg class="a" style="left:1774px;top:683px" width="10" height="6"><path d="M1 1L5 5L9 1" stroke="#bbb" stroke-width="1.2" fill="none"/></svg>
<div class="t" style="left:1797px;top:673px;font-size:12px;color:#b8b8b8">不透明度:</div>
<div class="a" style="left:1856px;top:672px;width:56px;height:16px;background:#282828"></div>
<div class="a" style="left:1893px;top:672px;width:1px;height:16px;background:#3a3a3a"></div>
<div class="t" style="left:1858px;top:675px;font-size:11px;color:#e0e0e0">100%</div>
<svg class="a" style="left:1898px;top:678px" width="10" height="6"><path d="M1 1L5 5L9 1" stroke="#bbb" stroke-width="1.2" fill="none"/></svg>
<div class="a" style="left:1638px;top:697px;width:282px;height:1px;background:#2a2a2a"></div>
<div class="t" style="left:1646px;top:708px;font-size:12px;color:#b8b8b8">锁定:</div>
<svg class="a" style="left:1687px;top:709px" width="13" height="13"><rect x="0" y="0" width="13" height="13" fill="#555"/><path d="M0 0H4V4H0Z M8 0H13V4H8Z M4 4H8V8H4Z M0 8H4V13H0Z M8 8H13V13H8Z" fill="#aaa"/></svg>
<svg class="a" style="left:1714px;top:708px" width="16" height="16"><path d="M15 1L7 10" stroke="#888" stroke-width="2.2" stroke-linecap="round"/><path d="M6 10C3 10 3 13 1 15C5 16 8 13 7 11Z" fill="#888"/></svg>
<svg class="a" style="left:1740px;top:708px" width="16" height="16"><path d="M8 1V15M1 8H15" stroke="#d8d8d8" stroke-width="1.6"/><path d="M8 0L11 3H5Z M8 16L11 13H5Z M0 8L3 5V11Z M16 8L13 5V11Z" fill="#d8d8d8"/></svg>
<svg class="a" style="left:1767px;top:707px" width="18" height="17"><path d="M3 2V14H16M1 4H12L15 7V12" fill="none" stroke="#d8d8d8" stroke-width="1.4" stroke-dasharray="9 1.5"/></svg>
<svg class="a" style="left:1795px;top:706px" width="15" height="17"><path d="M4 8V5C4 2.5 5.5 1 7.5 1C9.5 1 11 2.5 11 5V8" fill="none" stroke="#d8d8d8" stroke-width="2"/><rect x="1.5" y="7.5" width="12" height="9" rx="1" fill="#d8d8d8"/><circle cx="7.5" cy="12" r="1.3" fill="#323232"/></svg>
<div class="t" style="left:1820px;top:708px;font-size:12px;color:#b8b8b8">填充:</div>
<div class="a" style="left:1856px;top:706px;width:56px;height:17px;background:#282828"></div>
<div class="a" style="left:1893px;top:706px;width:1px;height:17px;background:#3a3a3a"></div>
<div class="t" style="left:1858px;top:709px;font-size:11px;color:#e0e0e0">100%</div>
<svg class="a" style="left:1898px;top:713px" width="10" height="6"><path d="M1 1L5 5L9 1" stroke="#bbb" stroke-width="1.2" fill="none"/></svg>


<!-- layers list -->
<div class="a" style="left:1638px;top:734px;width:262px;height:314px;background:#323232"></div>
<div class="a" style="left:1639px;top:773px;width:260px;height:1px;background:#2a2a2a"></div>
<div class="a" style="left:1639px;top:813px;width:260px;height:1px;background:#2a2a2a"></div>
<div class="a" style="left:1639px;top:853px;width:260px;height:1px;background:#2a2a2a"></div>
<div class="a" style="left:1639px;top:893px;width:260px;height:1px;background:#2a2a2a"></div>
<div class="a" style="left:1639px;top:933px;width:260px;height:1px;background:#2a2a2a"></div>
<div class="a" style="left:1639px;top:973px;width:260px;height:1px;background:#2a2a2a"></div>
<div class="a" style="left:1639px;top:1013px;width:260px;height:1px;background:#2a2a2a"></div>
<div class="a" style="left:1676px;top:734px;width:1px;height:314px;background:#2c2c2c"></div>
<div class="a" style="left:1650px;top:746px;width:16px;height:16px;border:1px solid #3a3a3a"></div>
<div class="a" style="left:1682px;top:740px;width:39px;height:28px;border:1px solid #777;background:#fff;overflow:hidden"><div style="position:absolute;inset:0;background:linear-gradient(135deg,#d8ecf0 0%,#c8d8f0 30%,#e8d0e8 50%,#f0ecc8 70%,#d0e0f0 100%)"></div></div>
<div class="t" style="left:1733px;top:747px;font-size:12px;color:#e0e0e0">效果</div>
<div class="a" style="left:1650px;top:786px;width:16px;height:16px;border:1px solid #3a3a3a"></div>
<div class="a" style="left:1682px;top:780px;width:39px;height:28px;border:1px solid #777;background:#fff;overflow:hidden"><div style="position:absolute;inset:0;background:#f6f2d8"></div><div style="position:absolute;left:4px;top:4px;width:8px;height:6px;background:#b8d8a0;border-radius:50%"></div><div style="position:absolute;left:18px;top:6px;width:9px;height:7px;background:#e0b8a0;border-radius:50%"></div><div style="position:absolute;left:10px;top:14px;width:9px;height:7px;background:#a8d098;border-radius:50%"></div><div style="position:absolute;left:26px;top:16px;width:8px;height:6px;background:#d8b0a0;border-radius:50%"></div></div>
<div class="t" style="left:1733px;top:787px;font-size:12px;color:#e0e0e0">效果1</div>
<!-- selected row -->
<div class="a" style="left:1677px;top:815px;width:221px;height:38px;background:#464646"></div>
<svg class="a" style="left:1649px;top:828px" width="17" height="11"><path d="M0.5 5.5C3 1 14 1 16.5 5.5C14 10 3 10 0.5 5.5Z" fill="#d8d8d8"/><circle cx="8.5" cy="5.5" r="2.6" fill="#323232"/></svg>
<svg class="a" style="left:1687px;top:828px" width="10" height="11"><path d="M9 1H5V8" fill="none" stroke="#d8d8d8" stroke-width="1.4"/><path d="M2 7H8L5 10.5Z" fill="#d8d8d8"/></svg>
<svg class="a" style="left:1715px;top:828px" width="13" height="13"><circle cx="6.5" cy="6.5" r="5.5" fill="none" stroke="#d8d8d8" stroke-width="1.5"/><path d="M10.4 2.6A5.5 5.5 0 0 1 2.6 10.4Z" fill="#d8d8d8"/></svg>
<svg class="a" style="left:1745px;top:825px" width="10" height="19"><rect x="1.5" y="1.5" width="7" height="8" rx="3.5" fill="none" stroke="#d8d8d8" stroke-width="1.5"/><rect x="1.5" y="9.5" width="7" height="8" rx="3.5" fill="none" stroke="#d8d8d8" stroke-width="1.5"/></svg>
<svg class="a" style="left:1757px;top:818px" width="46" height="34"><path d="M1 7V1H15M31 1H45V7M1 27V33H15M31 33H45V27" fill="none" stroke="#fff" stroke-width="1.5"/></svg>
<div class="a" style="left:1761px;top:821px;width:38px;height:28px;background:#444"></div>
<div class="a" style="left:1763px;top:823px;width:35px;height:25px;background:#fff"></div>
<div class="t" style="left:1811px;top:828px;font-size:12px;color:#e8e8e8">色相/... 1</div>
<svg class="a" style="left:1649px;top:869px" width="17" height="11"><path d="M0.5 5.5C3 1 14 1 16.5 5.5C14 10 3 10 0.5 5.5Z" fill="#d8d8d8"/><circle cx="8.5" cy="5.5" r="2.6" fill="#323232"/></svg>
<div class="a" style="left:1682px;top:860px;width:39px;height:28px;border:1px solid #777;background:#fff;overflow:hidden"><div style="position:absolute;inset:0;background-color:#fff;background-image:linear-gradient(45deg,#ccc 25%,transparent 25%,transparent 75%,#ccc 75%),linear-gradient(45deg,#ccc 25%,transparent 25%,transparent 75%,#ccc 75%);background-size:5px 5px;background-position:0 0,2.5px 2.5px"></div><div style="position:absolute;left:10px;top:8px;width:14px;height:10px;background:rgba(180,220,170,0.5);border-radius:50%"></div></div>
<div class="t" style="left:1733px;top:867px;font-size:12px;color:#e0e0e0;text-decoration:underline">图层 1</div>
<div class="a" style="left:1650px;top:906px;width:16px;height:16px;border:1px solid #3a3a3a"></div>
<div class="a" style="left:1682px;top:900px;width:39px;height:28px;border:1px solid #777;background:#fff;overflow:hidden"><div style="position:absolute;inset:0;background-color:#fff;background-image:linear-gradient(45deg,#ccc 25%,transparent 25%,transparent 75%,#ccc 75%),linear-gradient(45deg,#ccc 25%,transparent 25%,transparent 75%,#ccc 75%);background-size:5px 5px;background-position:0 0,2.5px 2.5px"></div><svg style="position:absolute;left:0;top:0" width="38" height="27"><defs><linearGradient id="lg" x1="0" y1="0" x2="0" y2="1"><stop offset="0" stop-color="#5cb030"/><stop offset="1" stop-color="#2c8a18"/></linearGradient></defs><path d="M7 11C9 7 12 4 15.5 3L17.5 8L19 3C23 3 27 7 29 10C26 13 21 15 18 18C15 15 10 13 7 11Z" fill="url(#lg)"/><path d="M18 18L21 24" stroke="#8a9a80" stroke-width="0.8"/></svg></div>
<div class="t" style="left:1733px;top:907px;font-size:12px;color:#e0e0e0">树叶</div>
<svg class="a" style="left:1649px;top:949px" width="17" height="11"><path d="M0.5 5.5C3 1 14 1 16.5 5.5C14 10 3 10 0.5 5.5Z" fill="#d8d8d8"/><circle cx="8.5" cy="5.5" r="2.6" fill="#323232"/></svg>
<div class="a" style="left:1691px;top:945px;width:21px;height:20px;background:#f2f0c8;border:1px solid #aaa"></div>
<svg class="a" style="left:1725px;top:945px" width="10" height="19"><rect x="1.5" y="1.5" width="7" height="8" rx="3.5" fill="none" stroke="#d8d8d8" stroke-width="1.5"/><rect x="1.5" y="9.5" width="7" height="8" rx="3.5" fill="none" stroke="#d8d8d8" stroke-width="1.5"/></svg>
<div class="a" style="left:1740px;top:941px;width:40px;height:28px;background:#fff;border:1px solid #666"></div>
<div class="t" style="left:1791px;top:947px;font-size:12px;color:#e0e0e0">颜色填充 1</div>
<svg class="a" style="left:1649px;top:989px" width="17" height="11"><path d="M0.5 5.5C3 1 14 1 16.5 5.5C14 10 3 10 0.5 5.5Z" fill="#d8d8d8"/><circle cx="8.5" cy="5.5" r="2.6" fill="#323232"/></svg>
<div class="a" style="left:1682px;top:980px;width:39px;height:28px;border:1px solid #777;background:#fff;overflow:hidden"><svg style="position:absolute;left:0;top:0" width="38" height="27"><defs><linearGradient id="lg" x1="0" y1="0" x2="0" y2="1"><stop offset="0" stop-color="#5cb030"/><stop offset="1" stop-color="#2c8a18"/></linearGradient></defs><path d="M7 11C9 7 12 4 15.5 3L17.5 8L19 3C23 3 27 7 29 10C26 13 21 15 18 18C15 15 10 13 7 11Z" fill="url(#lg)"/><path d="M18 18L21 24" stroke="#8a9a80" stroke-width="0.8"/></svg></div>
<div class="t" style="left:1733px;top:987px;font-size:12px;color:#e0e0e0">背景 拷贝</div>
<svg class="a" style="left:1649px;top:1029px" width="17" height="11"><path d="M0.5 5.5C3 1 14 1 16.5 5.5C14 10 3 10 0.5 5.5Z" fill="#d8d8d8"/><circle cx="8.5" cy="5.5" r="2.6" fill="#323232"/></svg>
<div class="a" style="left:1682px;top:1020px;width:39px;height:28px;border:1px solid #777;background:#fff;overflow:hidden"><svg style="position:absolute;left:0;top:0" width="38" height="27"><defs><linearGradient id="lg" x1="0" y1="0" x2="0" y2="1"><stop offset="0" stop-color="#5cb030"/><stop offset="1" stop-color="#2c8a18"/></linearGradient></defs><path d="M7 11C9 7 12 4 15.5 3L17.5 8L19 3C23 3 27 7 29 10C26 13 21 15 18 18C15 15 10 13 7 11Z" fill="url(#lg)"/><path d="M18 18L21 24" stroke="#8a9a80" stroke-width="0.8"/></svg></div>
<div class="t" style="left:1733px;top:1027px;font-size:12px;color:#e0e0e0">背景</div>
<svg class="a" style="left:1865px;top:1026px" width="13" height="15"><path d="M3.5 7V4.5C3.5 2.5 4.8 1 6.5 1C8.2 1 9.5 2.5 9.5 4.5V7" fill="none" stroke="#d8d8d8" stroke-width="1.8"/><rect x="1" y="6.5" width="11" height="8" rx="1" fill="#d8d8d8"/><circle cx="6.5" cy="10.5" r="1.2" fill="#323232"/></svg>
<!-- layer scrollbar -->
<div class="a" style="left:1900px;top:734px;width:16px;height:314px;background:#2a2a2a"></div>
<svg class="a" style="left:1904px;top:744px" width="9" height="6"><path d="M1 5L4.5 1.5L8 5" fill="none" stroke="#888" stroke-width="1.2"/></svg>
<div class="a" style="left:1901px;top:756px;width:14px;height:265px;background:#474747"></div>
<svg class="a" style="left:1904px;top:1033px" width="9" height="6"><path d="M1 1L4.5 4.5L8 1" fill="none" stroke="#888" stroke-width="1.2"/></svg>
<!-- layers footer -->
<div class="a" style="left:1638px;top:1048px;width:282px;height:32px;background:#2e2e2e"></div>
<div class="a" style="left:1638px;top:1048px;width:262px;height:1px;background:#262626"></div>
<svg class="a" style="left:1688px;top:1057px" width="18" height="12"><path d="M7 2H4C2 2 1 4 1 6C1 8 2 10 4 10H7M11 2H14C16 2 17 4 17 6C17 8 16 10 14 10H11M5 6H13" fill="none" stroke="#888" stroke-width="1.5"/></svg>
<div class="t" style="left:1719px;top:1055px;font-size:17px;font-style:italic;color:#d8d8d8;font-family:'Liberation Serif',serif">fx</div>
<svg class="a" style="left:1733px;top:1070px" width="6" height="4"><path d="M0 0H6L3 3.5Z" fill="#d8d8d8"/></svg>
<svg class="a" style="left:1751px;top:1057px" width="16" height="12"><rect x="0" y="0" width="16" height="12" rx="1" fill="#d8d8d8"/><circle cx="8" cy="6" r="3.3" fill="#2e2e2e"/></svg>
<svg class="a" style="left:1782px;top:1056px" width="14" height="18"><circle cx="6.5" cy="6.5" r="5.5" fill="none" stroke="#d8d8d8" stroke-width="1.5"/><path d="M10.4 2.6A5.5 5.5 0 0 1 2.6 10.4Z" fill="#d8d8d8"/><path d="M8 14H14L11 17.5Z" fill="#d8d8d8"/></svg>
<svg class="a" style="left:1810px;top:1056px" width="17" height="14"><path d="M1 2H6L8 4H16V13H1Z" fill="#d8d8d8"/></svg>
<svg class="a" style="left:1842px;top:1056px" width="14" height="15"><path d="M1 1H13V14H5L1 10Z" fill="none" stroke="#d8d8d8" stroke-width="1.5"/><path d="M1 10H5V14" fill="none" stroke="#d8d8d8" stroke-width="1.5"/></svg>
<svg class="a" style="left:1871px;top:1055px" width="17" height="20"><path d="M1 4H16M6 4V1.5H11V4" fill="none" stroke="#d8d8d8" stroke-width="1.4"/><path d="M2.8 5.5H14.2V18.5H2.8Z" fill="none" stroke="#d8d8d8" stroke-width="1.4"/><path d="M6.3 7.5V16.5M8.5 7.5V16.5M10.7 7.5V16.5" stroke="#d8d8d8" stroke-width="1"/></svg>

<svg class="a" style="left:1294px;top:336px" width="14" height="21"><path d="M1.5 1.5V16.5L5 13L8 19.5L10.5 18.5L7.5 12H12.5Z" fill="#fff" stroke="#000" stroke-width="1.5" stroke-linejoin="round"/></svg>
<!-- PANELS_END -->
</body></html>
